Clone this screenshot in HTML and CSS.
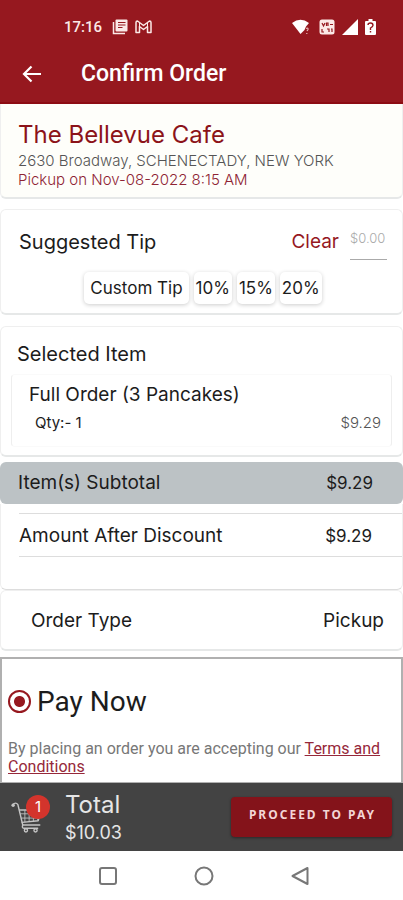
FILE: index.html
```html
<!DOCTYPE html>
<html lang="en">
<head>
<meta charset="utf-8">
<meta name="viewport" content="width=device-width, initial-scale=1">
<title>Confirm Order</title>
<link rel="stylesheet" href="styles.css">
</head>
<body>
<header class="top">
  <div class="status">
    <span class="clock">17:16</span>
    <svg class="status-icon" width="16" height="16" viewBox="0 0 16 16" aria-hidden="true">
      <path d="M1.500 3v11.500h11.500" fill="none" stroke="#fbe9e7" stroke-width="1.500"/>
      <rect x="3.500" y="0.500" width="12" height="12" rx="1" fill="#fbe9e7"/>
      <path d="M6 3.500h7.500M6 6h7.500M6 8.500h4.500" stroke="#96181f" stroke-width="1.200"/>
    </svg>
    <svg class="status-icon" width="17" height="14" viewBox="0 0 17 14" aria-hidden="true">
      <path d="M1 2.500Q1 1 2.500 1L8.500 5.500 14.500 1Q16 1 16 2.500V12.500H12.500V6.500L8.500 9.500 4.500 6.500V12.500H1Z" fill="none" stroke="#fbe9e7" stroke-width="1.500" stroke-linejoin="round"/>
      <path d="M4.500 2.500v4M12.500 2.500v4" stroke="#fbe9e7"/>
    </svg>
    <span class="spacer"></span>
    <svg class="status-icon wifi" width="18" height="16" viewBox="0 0 18 16" aria-hidden="true">
      <path d="M0 4Q8.500-2.500 17 4L14 7.500 12.500 11 8.500 15Z" fill="#fff"/>
      <path d="M14 9.500q2.500-1 2 1l-1 1.500M14.800 14v1" fill="none" stroke="#e8b8b8" stroke-width="1.200"/>
    </svg>
    <svg class="status-icon" width="16" height="16" viewBox="0 0 16 16" aria-hidden="true">
      <rect x="0.500" y="0.500" width="15" height="15" rx="2.500" fill="#fbe9e7"/>
      <path d="M3 4l1.500 3L6 4M7.500 7V4h1.500v3M11 5.500h3M3 10v3h2M8 10h2v3M12 10h1v3" fill="none" stroke="#96181f" stroke-width="1.200"/>
    </svg>
    <svg class="status-icon" width="16" height="16" viewBox="0 0 16 16" aria-hidden="true"><path d="M0 16 16 0V16Z" fill="#fff"/></svg>
    <svg class="status-icon" width="11" height="16" viewBox="0 0 11 16" aria-hidden="true">
      <path d="M1 2h2.500V0h4v2H10q1 0 1 1v12q0 1-1 1H1q-1 0-1-1V3q0-1 1-1Z" fill="#fff"/>
      <path d="M3 6q0-2 2.500-2T8 6.200Q8 7.500 5.500 9v2M5.500 12v1.500" fill="none" stroke="#96181f" stroke-width="1.400"/>
    </svg>
  </div>
  <div class="appbar">
    <button class="back" type="button" aria-label="Back">
      <svg width="20" height="18" viewBox="0 0 20 18"><path d="M19 9H2M9.500 1.500 2 9l7.500 7.500" fill="none" stroke="#fff" stroke-width="2.200"/></svg>
    </button>
    <h1>Confirm Order</h1>
  </div>
</header>

<main class="content">
  <section class="card cafe">
    <h2>The Bellevue Cafe</h2>
    <p class="address">2630 Broadway, SCHENECTADY, NEW YORK</p>
    <p class="pickup">Pickup on Nov-08-2022 8:15 AM</p>
  </section>

  <section class="card tip">
    <div class="row">
      <label for="tip">Suggested Tip</label>
      <button class="clear" type="button">Clear</button>
      <input id="tip" type="text" placeholder="$0.00">
    </div>
    <div class="tips">
      <button class="custom" type="button">Custom Tip</button>
      <button type="button">10%</button>
      <button type="button">15%</button>
      <button type="button">20%</button>
    </div>
  </section>

  <section class="card selected">
    <h3>Selected Item</h3>
    <div class="item">
      <p>Full Order (3 Pancakes)</p>
      <div class="row detail"><span>Qty:- 1</span><span class="price">$9.29</span></div>
    </div>
  </section>

  <section class="amounts">
    <div class="row subtotal"><span>Item(s) Subtotal</span><span class="amount">$9.29</span></div>
    <div class="discount"><div class="row after"><span>Amount After Discount</span><span class="amount">$9.29</span></div></div>
  </section>

  <section class="card row order-type"><span>Order Type</span><span>Pickup</span></section>

  <section class="payment">
    <label class="pay-now"><input type="radio" name="pay" checked>Pay Now</label>
    <p>By placing an order you are accepting our <a href="#terms">Terms and Conditions</a></p>
  </section>
</main>

<footer class="bottom">
  <div class="checkout">
    <div class="cart">
      <svg width="32" height="32" viewBox="0 0 30 30" aria-hidden="true">
        <g fill="none" stroke="#c4c4c4" stroke-width="1.300" stroke-linecap="round" stroke-linejoin="round">
          <path d="M1.500 3.500q3-3 5 0L11 22.500h16"/>
          <path d="M8 8.500h20L25.500 18.500 10.500 20"/>
          <path d="M9 12h18M10 16h16M13 9v10.500M17 9v10M21 9v10M25 9v9" stroke-width="0.800"/>
          <path d="M11 22.500q-1 3 1 3h13"/>
          <circle cx="14" cy="27.500" r="1.500"/><circle cx="23" cy="27.500" r="1.500"/>
        </g>
        <circle cx="2" cy="4" r="1.600" fill="#c4c4c4"/>
      </svg>
      <span class="badge">1</span>
    </div>
    <div class="total"><span class="total-label">Total</span><span class="total-price">$10.03</span></div>
    <button class="proceed" type="button">PROCEED TO PAY</button>
  </div>
  <nav class="system" aria-label="System">
    <button type="button" aria-label="Recent apps"><svg width="20" height="20" viewBox="0 0 20 20"><rect x="2" y="2" width="16" height="16" rx="2"/></svg></button>
    <button type="button" aria-label="Home"><svg width="20" height="20" viewBox="0 0 20 20"><circle cx="10" cy="10" r="8.500"/></svg></button>
    <button type="button" aria-label="Back"><svg width="20" height="20" viewBox="0 0 20 20"><path d="M17.500 2v16L2.500 10Z"/></svg></button>
  </nav>
</footer>
</body>
</html>
```
FILE: styles.css
```css
* { box-sizing: border-box; }

body {
  margin: 0;
  min-height: 100vh;
  display: flex;
  flex-direction: column;
  background: #fff;
  color: #1c1c1c;
  font: 19px/24px Inter, "Liberation Sans", sans-serif;
}

h1, h2, h3, p { margin: 0; font-weight: 400; }

button {
  padding: 0;
  border: 0;
  background: none;
  color: inherit;
  font: inherit;
  cursor: pointer;
}

svg { display: block; }

.row { display: flex; align-items: center; justify-content: space-between; }

/* Header */
.top { background: #96181f; color: #fff; border-bottom: 2px solid #8c0c13; }

.status {
  display: flex;
  align-items: center;
  gap: 7px;
  padding: 15px 27px 6px 64px;
  color: #fbe9e7;
}

.clock { margin-right: 3px; font: 500 15px/24px Roboto, sans-serif; }
.spacer { flex: 1; }
.wifi { margin-right: 2px; }

.appbar { display: flex; align-items: center; gap: 39px; padding: 15px 22px 14px; }
.appbar h1 { font: 500 23px/28px Roboto, sans-serif; }

/* Cards */
.card {
  border: 1px solid #efefef;
  border-bottom: 2px solid #e6e8e8;
  border-radius: 6px;
}

.cafe {
  padding: 15px 17px 8px;
  border-top: 0;
  border-radius: 0 0 6px 6px;
  background: #fefefa;
}

.cafe h2 { color: #8c1319; font-size: 24px; line-height: 32px; }
.cafe p { font-size: 15px; line-height: 19px; font-weight: 300; }
.address { color: #555; }
.pickup { color: #8f2434; }

.tip { margin-top: 10px; padding: 14px 15px 9px 18px; }
.tip label { flex: 1; font-size: 20px; }
.clear { margin-right: 11px; color: #96181f; }

.tip input {
  width: 37px;
  height: 36px;
  padding: 0 0 8px;
  border: 0;
  border-bottom: 1px solid #aaa;
  background: none;
  font: 300 13px/20px Inter, sans-serif;
}

.tip input::placeholder { color: #aaa; opacity: 1; }

.tips { display: flex; justify-content: center; gap: 5px; margin-top: 12px; }

.tips button {
  padding: 4px 2px;
  border-radius: 5px;
  box-shadow: 0 1px 4px #0003;
  font-size: 17px;
}

.tips .custom { padding: 4px 6px; }

.selected { margin-top: 11px; padding: 15px 10px 8px; }
.selected h3 { margin-left: 6px; font-size: 20px; line-height: 24px; }

.item {
  margin-top: 8px;
  padding: 8px 10px 11px 17px;
  border: 1px solid #eee;
  border-top-color: #fafafa;
  border-bottom-color: #fafafa;
  border-radius: 4px;
}

.detail { padding-left: 6px; margin-top: 4px; font-size: 15px; }
.price { color: #555; font-weight: 300; }

.subtotal {
  margin-top: 5px;
  padding: 9px 30px 9px 18px;
  border-radius: 6px;
  background: #bcc2c5;
}

.amount { font-size: 17px; }

.discount {
  padding: 9px 0 32px 18px;
  border: 1px solid #efefef;
  border-top: 0;
  border-bottom-color: #ddd;
  border-radius: 0 0 6px 6px;
}

.after { padding: 10px 30px 8px 0; border: 1px solid #ddd; border-width: 1px 0; }

.order-type { padding: 18px 18px 16px 30px; }

/* Payment */
.payment {
  margin-top: 6px;
  padding: 27px 12px 6px 6px;
  border: 1px solid #b0b0b0;
  border-width: 2px 2px 1px;
  font-family: Roboto, sans-serif;
}

.pay-now { display: flex; align-items: center; gap: 6px; font-size: 28px; line-height: 32px; }

.pay-now input {
  appearance: none;
  width: 23px;
  height: 23px;
  margin: 0 0 2px;
  border: 2px solid #96181f;
  border-radius: 50%;
  background: radial-gradient(circle, #96181f 5px, #fff 6px);
}

.payment p { margin-top: 22px; color: #777; font-size: 16px; line-height: 18px; }
.payment a { color: #96283a; }

/* Footer */
.bottom { position: sticky; bottom: 0; margin-top: auto; background: #fff; }

.checkout {
  display: flex;
  align-items: center;
  padding: 6px 11px;
  background: #434343;
  color: #e6e6e6;
}

.cart { position: relative; width: 54px; }

.badge {
  position: absolute;
  top: -6px;
  left: 15px;
  width: 24px;
  height: 24px;
  border-radius: 50%;
  background: #d3342c;
  color: #fff;
  font-size: 15px;
  text-align: center;
}

.total { display: flex; flex: 1; flex-direction: column; }
.total-label { font-size: 24px; line-height: 32px; }
.total-price { font-size: 18px; line-height: 24px; }

.proceed {
  height: 40px;
  padding: 0 16px 4px 18px;
  border-radius: 4px;
  background: #84131a;
  box-shadow: 0 1px 3px #0006;
  color: #f3d5d5;
  font: 700 12px/16px "Noto Sans", sans-serif;
  letter-spacing: 2px;
}

.system { display: flex; justify-content: center; gap: 76px; padding: 15px 0 14px 5px; }
.system svg { fill: none; stroke: #777; stroke-width: 2; stroke-linejoin: round; }
```
